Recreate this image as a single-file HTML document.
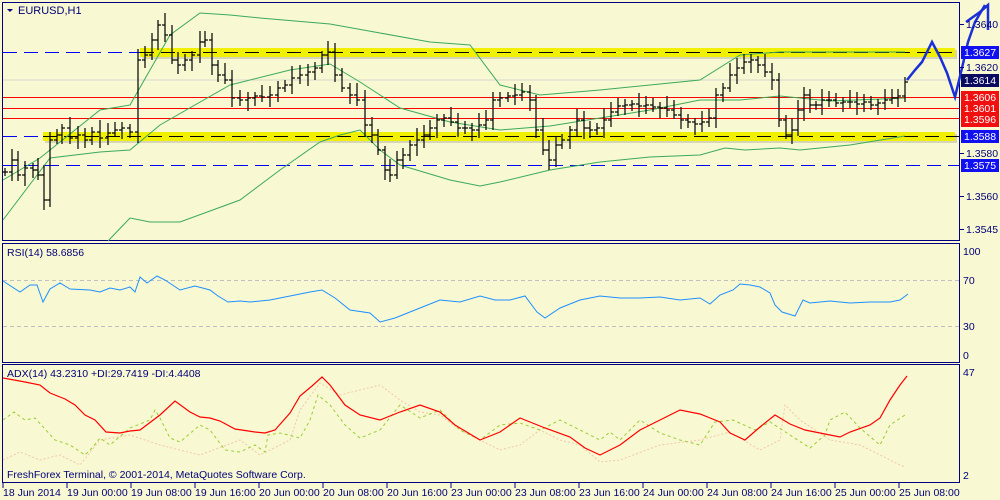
<!DOCTYPE html><html><head><style>
body{margin:0;width:1000px;height:500px;background:#f8f8d2;overflow:hidden;font-family:"Liberation Sans",sans-serif}
svg{display:block}
text{font-family:"Liberation Sans",sans-serif;font-size:10.5px;fill:#00007a}
</style></head><body>
<svg width="1000" height="500" id="s">
<rect width="1000" height="500" fill="#f8f8d2"/>
<rect x="2.5" y="2.5" width="957" height="238" fill="none" stroke="#000080"/>
<rect x="2.5" y="243.5" width="957" height="119" fill="none" stroke="#000080"/>
<rect x="2.5" y="364.5" width="957" height="118" fill="none" stroke="#000080"/>
<rect x="142" y="50" width="815" height="9" fill="#a0a090" opacity="0.4"/>
<rect x="45" y="134" width="912" height="9" fill="#a0a090" opacity="0.4"/>
<rect x="140" y="48" width="815" height="9" fill="#f0f000"/>
<rect x="43" y="132" width="912" height="9" fill="#f0f000"/>
<line x1="3" y1="80" x2="959" y2="80" stroke="#d8d8d0"/>
<line x1="3" y1="97.5" x2="959" y2="97.5" stroke="#f00"/>
<line x1="3" y1="108.5" x2="959" y2="108.5" stroke="#f00"/>
<line x1="3" y1="118.5" x2="959" y2="118.5" stroke="#f00"/>
<line x1="3" y1="52.5" x2="140" y2="52.5" stroke="#00f" stroke-dasharray="14,7"/>
<line x1="140" y1="52.5" x2="959" y2="52.5" stroke="#000" stroke-dasharray="14,7"/>
<line x1="3" y1="136.5" x2="43" y2="136.5" stroke="#00f" stroke-dasharray="14,7"/>
<line x1="43" y1="136.5" x2="959" y2="136.5" stroke="#000" stroke-dasharray="14,7"/>
<line x1="3" y1="165.5" x2="959" y2="165.5" stroke="#00f" stroke-dasharray="14,7"/>
<g fill="none" stroke="#3caa5a" stroke-width="1">
<polyline points="3,180 40,158 100,110 130,105 150,70 170,35 200,13 230,15 260,18 330,24 380,33 430,42 470,45 500,85 540,95 600,90 650,85 700,80 740,55 780,52 830,52 905,52"/>
<polyline points="3,220 50,158 100,152 130,150 160,125 230,85 290,70 330,64 360,82 400,108 450,122 500,130 550,126 600,118 650,110 700,100 740,100 780,96 830,101 905,98"/>
<polyline points="108,241 130,218 150,222 180,222 240,200 280,170 320,142 340,135 360,130 380,150 400,165 450,180 480,186 500,182 550,170 600,162 650,157 700,155 725,148 745,150 780,148 800,150 850,145 905,136"/>
</g>
<g id="bars" stroke="#000" stroke-width="1.2" fill="none"></g>
<polyline points="907,80 915,70 922,62 927,52 932,42 940,57 947,73 955,97 962,68 968,42 975,22 985,5" fill="none" stroke="#1a2fd8" stroke-width="2.5"/>
<polyline points="966,22 980,12 988,5 988,30" fill="none" stroke="#1a2fd8" stroke-width="2.5"/>
<g stroke="#000080">
<line x1="960" y1="24.5" x2="964" y2="24.5"/><line x1="960" y1="67.5" x2="964" y2="67.5"/><line x1="960" y1="153.5" x2="964" y2="153.5"/><line x1="960" y1="196.5" x2="964" y2="196.5"/><line x1="960" y1="229.5" x2="964" y2="229.5"/>
</g>
<g>
<text x="966" y="28">1.3640</text>
<rect x="961" y="46" width="38" height="13" fill="#1010f0"/><text x="964" y="56" style="fill:#fff">1.3627</text>
<text x="966" y="71">1.3620</text>
<rect x="961" y="74" width="38" height="13" fill="#0a0a60"/><text x="964" y="84" style="fill:#fff">1.3614</text>
<rect x="961" y="91" width="38" height="13" fill="#f01010"/><text x="964" y="101" style="fill:#fff">1.3606</text>
<rect x="961" y="103" width="38" height="24" fill="#f01010"/><text x="964" y="112" style="fill:#fff">1.3601</text><text x="964" y="123" style="fill:#fff">1.3596</text>
<rect x="961" y="130" width="38" height="13" fill="#1010f0"/><text x="964" y="140" style="fill:#fff">1.3588</text>
<text x="966" y="157">1.3580</text>
<rect x="961" y="159" width="38" height="13" fill="#1010f0"/><text x="964" y="169" style="fill:#fff">1.3575</text>
<text x="966" y="200">1.3560</text>
<text x="966" y="233">1.3545</text>
<text x="963" y="255">100</text><text x="963" y="284">70</text><text x="963" y="330">30</text><text x="963" y="359">0</text>
<text x="963" y="376">47</text><text x="963" y="479">2</text>
</g>
<polygon points="7,9 13,9 10,12" fill="#00007a"/>
<text x="18" y="14" style="font-size:11px">EURUSD,H1</text>
<text x="7" y="256">RSI(14) 58.6856</text>
<text x="7" y="377">ADX(14) 43.2310 +DI:29.7419 -DI:4.4408</text>
<text x="7" y="478">FreshForex Terminal, © 2001-2014, MetaQuotes Software Corp.</text>
<line x1="3" y1="280.5" x2="959" y2="280.5" stroke="#c0c0c0" stroke-dasharray="4,3"/>
<line x1="3" y1="326.5" x2="959" y2="326.5" stroke="#c0c0c0" stroke-dasharray="4,3"/>
<polyline fill="none" stroke="#1e90ff" points="3,281 20,292 30,285 37,285 43,302 50,289 60,283 70,289 90,290 100,292 110,288 120,290 130,287 135,292 140,277 147,283 157,276 165,280 180,290 195,286 210,290 218,296 228,302 240,301 250,302 270,300 290,296 310,292 322,290 335,298 350,310 370,313 380,322 395,318 410,312 425,306 440,300 460,302 480,296 495,300 510,300 525,296 537,312 545,318 560,308 580,300 600,296 620,298 640,298 660,297 680,300 700,298 710,304 720,295 733,290 740,284 750,285 760,287 770,293 775,305 782,312 795,316 803,300 810,303 830,301 850,303 870,302 890,302 900,300 908,294"/>
<polyline fill="none" stroke="#f2c8a8" stroke-dasharray="2,2" points="3,460 20,452 40,460 60,455 80,465 100,440 130,435 160,445 200,455 240,440 260,455 290,440 300,410 320,383 340,395 380,385 400,400 420,412 440,415 460,430 480,440 500,450 520,445 540,430 560,440 580,445 600,462 620,460 660,445 700,440 730,432 760,450 780,440 785,405 800,420 830,440 860,445 900,465 905,467"/>
<polyline fill="none" stroke="#9acd32" stroke-dasharray="3,3" points="3,420 14,412 25,420 35,418 55,440 70,445 85,455 92,448 100,438 110,445 130,428 150,420 155,410 160,418 170,438 180,442 200,425 210,430 225,450 240,452 255,445 265,452 268,435 280,433 300,438 310,420 318,395 330,405 345,425 360,438 380,430 400,405 420,418 440,410 460,430 480,440 500,425 520,423 540,430 560,420 580,430 600,440 610,432 620,440 640,420 660,433 680,440 700,445 715,422 733,420 755,430 770,422 790,435 810,448 825,435 830,420 845,412 860,428 880,445 890,425 905,415"/>
<polyline fill="none" stroke="#f00" stroke-width="1.2" points="3,378 25,382 40,385 50,393 65,399 75,405 85,415 95,420 106,432 120,433 130,431 140,430 160,415 175,401 190,412 200,417 210,418 220,421 235,429 255,432 265,433 275,430 290,413 300,396 312,386 322,377 330,385 345,405 360,415 380,420 400,412 420,405 440,412 455,425 480,440 500,432 520,418 545,428 570,437 585,448 600,455 620,445 640,430 660,420 680,410 700,414 720,422 730,433 745,440 760,427 775,415 790,424 805,430 820,433 840,437 850,432 870,425 880,418 890,400 900,385 907,376"/>
<g stroke="#000080">
<line x1="3" y1="483" x2="3" y2="488"/><line x1="67" y1="483" x2="67" y2="488"/><line x1="131" y1="483" x2="131" y2="488"/><line x1="195" y1="483" x2="195" y2="488"/><line x1="259" y1="483" x2="259" y2="488"/><line x1="323" y1="483" x2="323" y2="488"/><line x1="387" y1="483" x2="387" y2="488"/><line x1="451" y1="483" x2="451" y2="488"/><line x1="515" y1="483" x2="515" y2="488"/><line x1="579" y1="483" x2="579" y2="488"/><line x1="643" y1="483" x2="643" y2="488"/><line x1="707" y1="483" x2="707" y2="488"/><line x1="771" y1="483" x2="771" y2="488"/><line x1="835" y1="483" x2="835" y2="488"/><line x1="899" y1="483" x2="899" y2="488"/>
</g>
<g style="font-size:10px">
<text x="3" y="496">18 Jun 2014</text><text x="67" y="496">19 Jun 00:00</text><text x="131" y="496">19 Jun 08:00</text><text x="195" y="496">19 Jun 16:00</text><text x="259" y="496">20 Jun 00:00</text><text x="323" y="496">20 Jun 08:00</text><text x="387" y="496">20 Jun 16:00</text><text x="451" y="496">23 Jun 00:00</text><text x="515" y="496">23 Jun 08:00</text><text x="579" y="496">23 Jun 16:00</text><text x="643" y="496">24 Jun 00:00</text><text x="707" y="496">24 Jun 08:00</text><text x="771" y="496">24 Jun 16:00</text><text x="835" y="496">25 Jun 00:00</text><text x="899" y="496">25 Jun 08:00</text>
</g>
</svg>
<script>
var pts=[[5,172],[12,160],[18,175],[25,168],[33,170],[38,175],[44,200],[50,140],[57,135],[62,128],[70,138],[78,135],[85,140],[92,132],[100,138],[108,133],[115,130],[122,128],[130,132],[138,60],[145,55],[152,40],[158,25],[165,35],[172,60],[178,65],[185,60],[192,55],[200,42],[205,40],[212,65],[218,75],[225,80],[232,98],[240,100],[248,98],[255,96],[262,97],[270,95],[278,88],[285,85],[292,78],[300,75],[308,72],[315,68],[322,55],[328,52],[335,75],[342,88],[350,95],[357,100],[365,125],[372,135],[378,150],[385,170],[390,175],[397,160],[403,155],[410,145],[417,140],[424,135],[430,128],[437,120],[444,118],[451,122],[458,128],[465,128],[472,130],[479,125],[486,120],[493,100],[500,98],[508,96],[515,95],[522,92],[530,100],[536,130],[543,150],[549,160],[556,145],[562,140],[570,130],[577,120],[584,128],[590,130],[597,128],[604,120],[611,112],[618,106],[625,105],[632,104],[639,106],[646,105],[653,107],[660,108],[667,110],[674,115],[681,120],[688,122],[695,124],[702,122],[709,118],[716,95],[723,88],[730,75],[737,68],[744,62],[751,60],[758,65],[765,72],[772,80],[779,120],[786,135],[792,130],[798,110],[804,95],[810,105],[816,105],[822,100],[829,100],[836,103],[843,102],[850,102],[857,104],[864,102],[871,105],[878,103],[885,100],[892,98],[898,96],[905,82]];
var g=document.getElementById('bars'),h='';
for(var i=0;i<pts.length;i++){var x=pts[i][0],c=pts[i][1],o=i?pts[i-1][1]:c;var hi=Math.min(o,c)-4-(i*7%9),lo=Math.max(o,c)+4+(i*5%8);
h+='<line x1="'+x+'" y1="'+hi+'" x2="'+x+'" y2="'+lo+'"/><line x1="'+(x-3)+'" y1="'+o+'" x2="'+x+'" y2="'+o+'"/><line x1="'+x+'" y1="'+c+'" x2="'+(x+3)+'" y2="'+c+'"/>';}
g.innerHTML=h;
</script>
</body></html>
